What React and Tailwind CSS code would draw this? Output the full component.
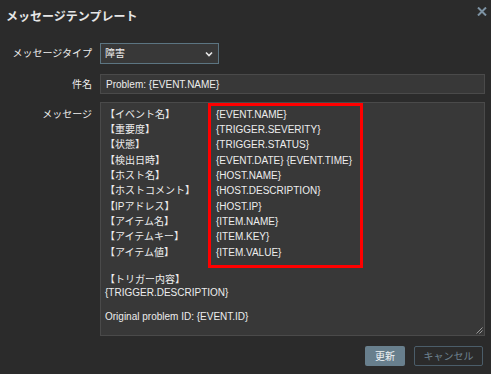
const FONT = { fontFamily: '"Liberation Sans", "Noto Sans CJK JP", sans-serif' }

const ROWS = [
  ['【イベント名】', '{EVENT.NAME}'],
  ['【重要度】', '{TRIGGER.SEVERITY}'],
  ['【状態】', '{TRIGGER.STATUS}'],
  ['【検出日時】', '{EVENT.DATE} {EVENT.TIME}'],
  ['【ホスト名】', '{HOST.NAME}'],
  ['【ホストコメント】', '{HOST.DESCRIPTION}'],
  ['【IPアドレス】', '{HOST.IP}'],
  ['【アイテム名】', '{ITEM.NAME}'],
  ['【アイテムキー】', '{ITEM.KEY}'],
  ['【アイテム値】', '{ITEM.VALUE}'],
]

function Close() {
  return (
    <svg width="10" height="9" viewBox="0 0 10 9" className="absolute top-[7px] right-[4px]">
      <path d="M1 0.5 L9 8.5 M9 0.5 L1 8.5" stroke="#7d92a3" strokeWidth="2" />
    </svg>
  )
}

export default function App() {
  return (
    <div className="relative w-[491px] h-[374px] bg-[#2b2b2b] text-[#ededed] overflow-hidden" style={FONT}>
      <Close />
      {/* header */}
      <div className="pl-[6px] pt-[8px] h-[26px] text-[12px] leading-[18px] font-bold text-[#e6e6e6]">
        メッセージテンプレート
      </div>

      {/* form */}
      <div className="grid grid-cols-[92px_1fr] gap-x-2 mt-[17px] pr-[6px] text-[10px]">
        <div className="flex items-center justify-end h-[21px]">メッセージタイプ</div>
        <div className="flex">
          <div className="w-[119px] h-[21px] bg-[#383838] border border-[#5c7582] flex items-center justify-between pl-[4px] pr-[5px]">
            <span>障害</span>
            <svg width="8" height="6" viewBox="0 0 8 6">
              <path d="M1 1.5 L4 4.5 L7 1.5" stroke="#e8e8e8" strokeWidth="1.6" fill="none" />
            </svg>
          </div>
        </div>

        <div className="flex items-center justify-end h-[20px] mt-[10px]">件名</div>
        <div className="h-[20px] mt-[10px] bg-[#383838] border border-[#4a4a4a] flex items-center pl-[5px]">
          Problem: {'{EVENT.NAME}'}
        </div>

        <div className="flex justify-end mt-[8px] pt-[5px] leading-[15px]">メッセージ</div>
        <div className="relative mt-[8px] h-[234px] bg-[#383838] border border-[#4a4a4a] pl-[4px]">
          <div className="flex leading-[15.33px]">
            <div className="w-[103px] pt-[3.7px]">
              {ROWS.map(([k]) => (
                <div key={k}>{k}</div>
              ))}
            </div>
            <div className="w-[155px] border-[3px] border-[#ff0000] pl-[5px] pt-[0.7px] pb-[4.7px]">
              {ROWS.map(([k, v]) => (
                <div key={k}>{v}</div>
              ))}
            </div>
          </div>
          <div className="mt-[5px] leading-[13.5px]">
            <div>【トリガー内容】</div>
            <div>{'{TRIGGER.DESCRIPTION}'}</div>
          </div>
          <div className="mt-[10.5px] leading-[13.5px]">Original problem ID: {'{EVENT.ID}'}</div>
          <svg width="7" height="7" viewBox="0 0 7 7" className="absolute right-[1px] bottom-[1px]">
            <path d="M6.5 0.5 L0.5 6.5 M6.5 3.5 L3.5 6.5" stroke="#9a9a9a" strokeWidth="1" />
          </svg>
        </div>
      </div>

      {/* buttons */}
      <div className="flex justify-end gap-[9px] mt-[10px] pr-[8px] text-[10px]">
        <button className="w-[40px] h-[20px] bg-[#687f8d] text-[#eef2f4] rounded-[2px]">更新</button>
        <button className="w-[69px] h-[20px] border border-[#4b5d69] text-[#6f8391] rounded-[2px]">キャンセル</button>
      </div>
    </div>
  )
}
